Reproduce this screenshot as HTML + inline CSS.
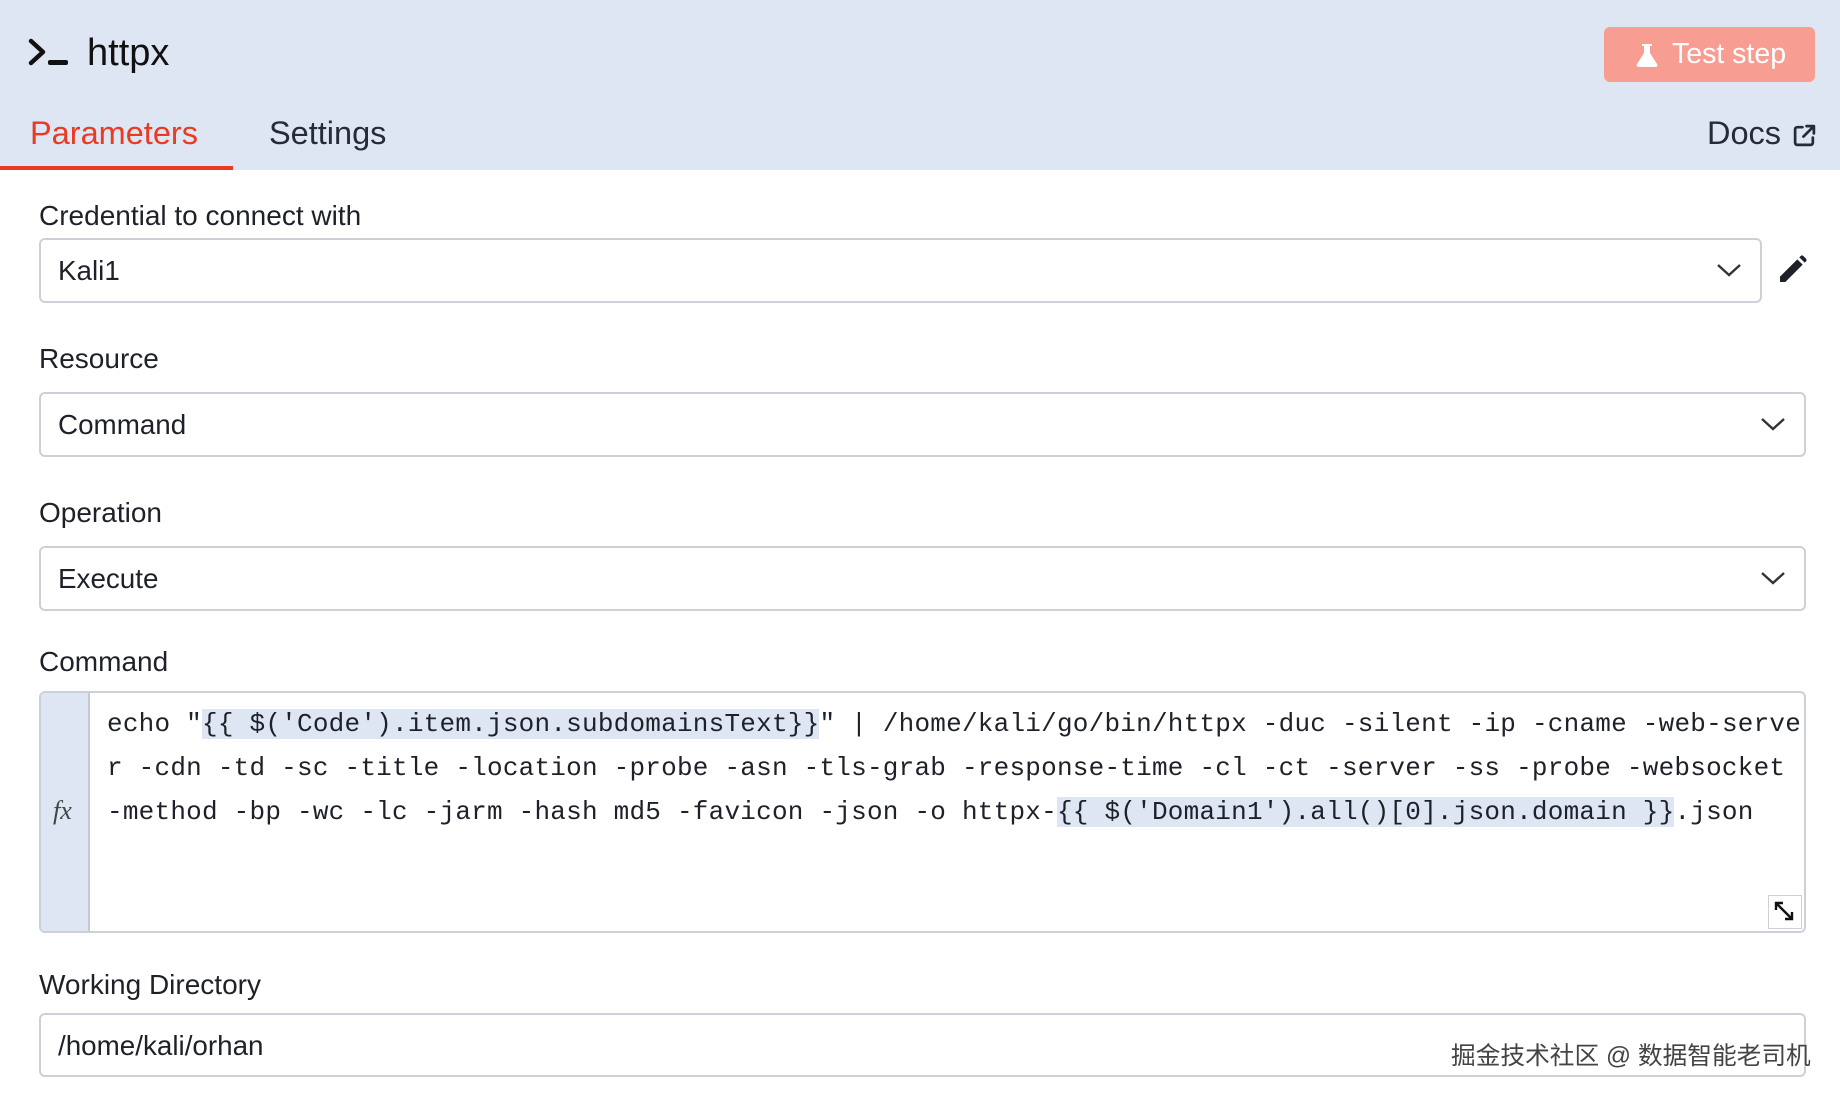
<!DOCTYPE html>
<html><head><meta charset="utf-8"><style>
*{box-sizing:border-box;margin:0;padding:0}
body{width:1840px;height:1101px;background:#fff;font-family:"Liberation Sans","Noto Sans CJK SC",sans-serif;color:#1e2129;position:relative;overflow:hidden}
.abs{position:absolute}
.hdr{left:0;top:0;width:1840px;height:170px;background:#dde6f2}
.lbl{left:39px;font-size:28px;line-height:30px}
.inp{left:39px;width:1767px;height:65px;border:2px solid #cdd0d8;border-radius:6px;background:#fff;font-size:27.8px;line-height:61px;padding-left:17px}
.chev{position:absolute;right:18px;top:20px}
.code{font-family:"Liberation Mono",monospace;font-size:26px;letter-spacing:0.23px;white-space:pre;left:107px;line-height:44px}
.hl{background:#dde6f2}
</style></head><body>
<div class="abs hdr"></div>
<svg class="abs" style="left:28px;top:38px" width="42" height="30" viewBox="0 0 42 30"><path d="M3 3 L15 14 L3 25" fill="none" stroke="#111" stroke-width="4.5" stroke-linecap="round" stroke-linejoin="round"/><rect x="20" y="22" width="20" height="5" rx="2" fill="#111"/></svg>
<div class="abs" style="left:87px;top:32px;font-size:38px;line-height:42px;color:#111">httpx</div>
<div class="abs" style="left:1604px;top:27px;width:211px;height:55px;background:#f89d91;border-radius:6px;color:#fff;font-size:28.5px;line-height:55px;padding-left:68px">Test step</div>
<svg class="abs" style="left:1634px;top:42px" width="26" height="26" viewBox="0 0 26 26"><path d="M8 2h10v2h-2v7l7 11c1 2 0 3-2 3H5c-2 0-3-1-2-3l7-11V4H8z" fill="#fff"/></svg>
<div class="abs" style="left:30px;top:115px;font-size:32.5px;line-height:36px;color:#ea3a22">Parameters</div>
<div class="abs" style="left:0;top:166px;width:233px;height:4px;background:#ea3a22"></div>
<div class="abs" style="left:269px;top:115px;font-size:32.5px;line-height:36px;color:#272b36">Settings</div>
<div class="abs" style="left:1707px;top:115px;font-size:32.5px;line-height:36px;color:#272b36">Docs</div>
<svg class="abs" style="left:1792px;top:123px" width="25" height="25" viewBox="0 0 24 24"><path d="M10 4H5a2 2 0 0 0-2 2v13a2 2 0 0 0 2 2h13a2 2 0 0 0 2-2v-5M14 3h7v7M21 3 11 13" fill="none" stroke="#272b36" stroke-width="2.6" stroke-linecap="round" stroke-linejoin="round"/></svg>

<div class="abs lbl" style="top:201px">Credential to connect with</div>
<div class="abs inp" style="top:238px;width:1723px">Kali1<svg class="chev" width="26" height="20" viewBox="0 0 26 20"><path d="M2 5l11 10L24 5" fill="none" stroke="#333" stroke-width="2.4"/></svg></div>
<svg class="abs" style="left:1776px;top:254px" width="32" height="32" viewBox="0 0 24 24"><path d="M3 21v-4L16 4l4 4L7 21zM17.5 2.5l4 4 1-1a1.5 1.5 0 0 0 0-2l-2-2a1.5 1.5 0 0 0-2 0z" fill="#1e2129"/></svg>

<div class="abs lbl" style="top:344px">Resource</div>
<div class="abs inp" style="top:392px">Command<svg class="chev" width="26" height="20" viewBox="0 0 26 20"><path d="M2 5l11 10L24 5" fill="none" stroke="#333" stroke-width="2.4"/></svg></div>

<div class="abs lbl" style="top:498px">Operation</div>
<div class="abs inp" style="top:546px">Execute<svg class="chev" width="26" height="20" viewBox="0 0 26 20"><path d="M2 5l11 10L24 5" fill="none" stroke="#333" stroke-width="2.4"/></svg></div>

<div class="abs lbl" style="top:647px">Command</div>
<div class="abs" style="left:39px;top:691px;width:1767px;height:242px;border:2px solid #cdd0d8;border-radius:6px;background:#fff;overflow:hidden">
 <div style="position:absolute;left:0;top:0;width:49px;height:100%;background:#dde6f2;border-right:2px solid #c3c9d4"></div>
 <div style="position:absolute;left:12px;top:103px;font-family:'Liberation Serif',serif;font-style:italic;font-size:26px;color:#444">fx</div>
 <div style="position:absolute;right:2px;bottom:2px;width:34px;height:34px;border:1px solid #cdd0d8;background:#fff"></div>
 <svg style="position:absolute;right:10px;bottom:10px" width="20" height="20" viewBox="0 0 20 20"><path d="M2 9V2h7M2 2l16 16M18 11v7h-7" fill="none" stroke="#111" stroke-width="2.4"/></svg>
</div>
<div class="abs code" style="top:702px">echo "<span class="hl">{{ $('Code').item.json.subdomainsText}}</span>" | /home/kali/go/bin/httpx -duc -silent -ip -cname -web-serve
r -cdn -td -sc -title -location -probe -asn -tls-grab -response-time -cl -ct -server -ss -probe -websocket
-method -bp -wc -lc -jarm -hash md5 -favicon -json -o httpx-<span class="hl">{{ $('Domain1').all()[0].json.domain }}</span>.json</div>

<div class="abs lbl" style="top:970px">Working Directory</div>
<div class="abs inp" style="top:1013px;height:64px">/home/kali/orhan</div>
<div class="abs" style="left:1451px;top:1042px;font-size:24.7px;line-height:30px;color:#444;font-family:'Liberation Sans','Noto Sans CJK SC',sans-serif;text-shadow:0 0 2px #fff">掘金技术社区 @ 数据智能老司机</div>
</body></html>
